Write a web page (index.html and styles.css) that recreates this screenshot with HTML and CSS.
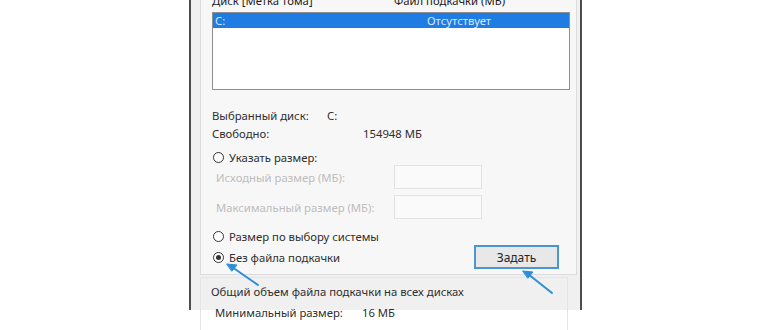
FILE: index.html
```html
<!DOCTYPE html>
<html lang="ru">
<head>
    <meta charset="UTF-8">
    <title>Виртуальная память</title>
    <link rel="stylesheet" href="styles.css">
</head>
<body>
    <div class="dialog">
        <div class="group">
            <div class="list-head">
                <span class="col-disk">Диск [Метка тома]</span>
                <span>Файл подкачки (МБ)</span>
            </div>
            <div class="list">
                <div class="list-row selected">
                    <span class="col-disk">C:</span>
                    <span class="col-file">Отсутствует</span>
                </div>
            </div>

            <div class="info">
                <div class="info-row"><span class="info-label">Выбранный диск:</span><span>C:</span></div>
                <div class="info-row"><span class="info-label wide">Свободно:</span><span>154948 МБ</span></div>
            </div>

            <label class="radio first">
                <span class="radio-dot"></span>Указать размер:
            </label>
            <div class="size-row">
                <span class="size-label">Исходный размер (МБ):</span>
                <span class="size-box"></span>
            </div>
            <div class="size-row">
                <span class="size-label">Максимальный размер (МБ):</span>
                <span class="size-box"></span>
            </div>

            <label class="radio system">
                <span class="radio-dot"></span>Размер по выбору системы
            </label>
            <div class="last-row">
                <label class="radio">
                    <span class="radio-dot checked"></span>Без файла подкачки
                </label>
                <button class="btn">Задать</button>
            </div>
        </div>

        <div class="total">
            <div class="total-title">Общий объем файла подкачки на всех дисках</div>
            <div class="info-row total-row"><span class="info-label wide">Минимальный размер:</span><span>16 МБ</span></div>
        </div>
    </div>

    <!-- pointer arrows drawn over the screenshot -->
    <svg class="arrows" width="770" height="330" viewBox="0 0 770 330">
        <g stroke="#2b8ed6" stroke-width="2" stroke-linecap="round" fill="#2b8ed6">
            <line x1="258" y1="285" x2="232" y2="267"/>
            <polygon points="227,264 237,265 232,271" stroke-width="1"/>
            <line x1="552" y1="293" x2="528" y2="274"/>
            <polygon points="523,271 533,272 528,278" stroke-width="1"/>
        </g>
    </svg>
</body>
</html>
```

FILE: styles.css
```css
* {
    margin: 0;
    padding: 0;
    box-sizing: border-box;
}

body {
    background: #fff;
    font-family: 'Noto Sans', 'Open Sans', sans-serif;
    font-size: 11.3px;
    color: #2e2e2e;
    width: 770px;
    height: 330px;
    overflow: hidden;
    position: relative;
}

.dialog {
    margin-left: 189px;
    width: 393px;
    height: 330px;
    background: #f0f0f0;
    border-left: 2px solid #4d4d4d;
    border-right: 2px solid #4d4d4d;
    padding: 0 3px 0 9px;
}

.group {
    margin-top: -20px;
    padding: 12px 6px 5px 11px;
    border: 1px solid #dcdcdc;
    background: #f7f7f7;
}

.list-head {
    display: flex;
    height: 16px;
    line-height: 16px;
    color: #1a1a1a;
}

.list-head .col-disk {
    width: 182px;
}

.list {
    margin-top: 3px;
    height: 78px;
    background: #fff;
    border: 1px solid #8f8f8f;
}

.list-row {
    display: flex;
    height: 15px;
    line-height: 15px;
    padding-left: 2px;
}

.list-row.selected {
    background: #1f7ce2;
    color: #d6eaff;
}

.list-row .col-disk {
    width: 212px;
}

.info {
    margin-top: 17px;
}

.info-row {
    display: flex;
    height: 18px;
    line-height: 18px;
}

.info-label {
    width: 115px;
}

.info-label.wide {
    width: 151px;
}

.radio {
    display: flex;
    align-items: center;
    gap: 5px;
    height: 18px;
}

.radio.first {
    margin-top: 6px;
    height: 16px;
}

.radio.system {
    margin-top: 8px;
}

.radio-dot {
    width: 11px;
    height: 11px;
    border: 1px solid #333;
    border-radius: 50%;
    background: #fff;
    display: flex;
    align-items: center;
    justify-content: center;
    margin-left: 1px;
}

.radio-dot.checked::after {
    content: '';
    width: 5px;
    height: 5px;
    border-radius: 50%;
    background: #333;
}

.size-row {
    display: flex;
    align-items: center;
    height: 24px;
    padding-left: 4px;
    color: #bdbdbd;
}

.size-row + .size-row {
    margin-top: 6px;
}

.size-label {
    width: 178px;
}

.size-box {
    width: 88px;
    height: 24px;
    border: 1px solid #e2e2e2;
    background: #fafafa;
}

.last-row {
    display: flex;
    align-items: center;
    justify-content: space-between;
    height: 24px;
    padding-right: 11px;
}

.btn {
    width: 85px;
    height: 24px;
    font: inherit;
    font-size: 12px;
    color: #262626;
    background: #e8e8e8;
    border: 2px solid #4c96d0;
}

.total {
    margin-top: 2px;
    margin-right: 9px;
    border: 1px solid #e4e4e4;
    border-bottom: none;
    height: 60px;
    padding: 5px 0 0 10px;
}

.total-title {
    height: 18px;
    line-height: 18px;
}

.total-row {
    margin-top: 3px;
    padding-left: 4px;
}

.total-row .info-label.wide {
    width: 147px;
}

.arrows {
    position: absolute;
    top: 0;
    left: 0;
    pointer-events: none;
}
```
